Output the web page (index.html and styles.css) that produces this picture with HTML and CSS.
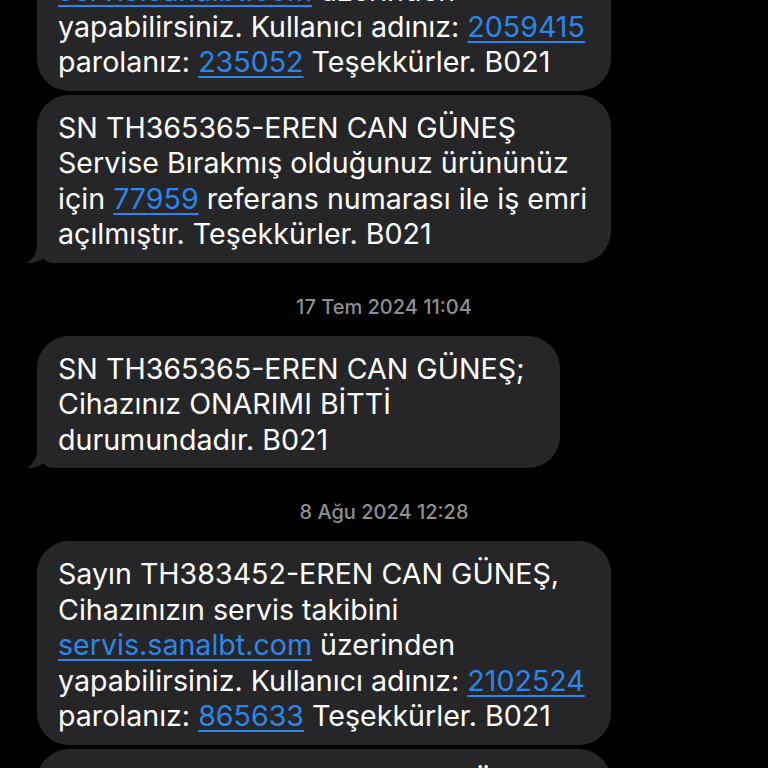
FILE: index.html
```html
<!DOCTYPE html>
<html lang="tr">
<head>
<meta charset="utf-8">
<title>Mesajlar</title>
<link rel="stylesheet" href="styles.css">
</head>
<body>
<main class="thread">
  <div class="bubble wide">
    Sayın TH365365-EREN CAN GÜNEŞ,<br>
    Cihazınızın servis takibini<br>
    <a class="link" href="#">servis.sanalbt.com</a> üzerinden<br>
    yapabilirsiniz. Kullanıcı adınız: <a class="link" href="#">2059415</a><br>
    parolanız: <a class="link" href="#">235052</a> Teşekkürler. B021
  </div>
  <div class="bubble wide tailed">
    SN TH365365-EREN CAN GÜNEŞ<br>
    Servise Bırakmış olduğunuz ürününüz<br>
    için <a class="link" href="#">77959</a> referans numarası ile iş emri<br>
    açılmıştır. Teşekkürler. B021
    <svg class="tail" width="28" height="20" viewBox="0 0 28 20"><path d="M10 0 L10 2 C10 10 6 16 0 20 C6 20.5 12 18.5 16 15.5 C19 18 23 20 28 20 L28 0 Z"/></svg>
  </div>

  <div class="stamp"><span class="date">17 Tem 2024</span> 11:04</div>

  <div class="bubble narrow tailed">
    SN TH365365-EREN CAN GÜNEŞ;<br>
    Cihazınız ONARIMI BİTTİ<br>
    durumundadır. B021
    <svg class="tail" width="28" height="20" viewBox="0 0 28 20"><path d="M10 0 L10 2 C10 10 6 16 0 20 C6 20.5 12 18.5 16 15.5 C19 18 23 20 28 20 L28 0 Z"/></svg>
  </div>

  <div class="stamp"><span class="date">8 Ağu 2024</span> 12:28</div>

  <div class="bubble wide">
    Sayın TH383452-EREN CAN GÜNEŞ,<br>
    Cihazınızın servis takibini<br>
    <a class="link" href="#">servis.sanalbt.com</a> üzerinden<br>
    yapabilirsiniz. Kullanıcı adınız: <a class="link" href="#">2102524</a><br>
    parolanız: <a class="link" href="#">865633</a> Teşekkürler. B021
  </div>
  <div class="bubble wide">
    Sayın TH383452-EREN CAN GÜNEŞ,<br>
    Cihazınız ONARIMI BİTTİ<br>
    durumundadır. B021
  </div>
</main>
</body>
</html>
```

FILE: styles.css
```css
* { box-sizing: border-box; }

html, body {
  margin: 0;
  padding: 0;
  background: #000;
  height: 768px;
  overflow: hidden;
}

.thread {
  display: flex;
  flex-direction: column;
  align-items: flex-start;
  gap: 4px;
  padding-left: 37px;
  margin-top: -113px;
  font-family: "Inter", "Noto Sans", sans-serif;
}

.bubble {
  position: relative;
  background: #262628;
  color: #ffffff;
  font-size: 28.6px;
  line-height: 35.5px;
  padding: 15px 20px 11px 21px;
  border-radius: 32px;
  white-space: nowrap;
}

.bubble.wide { width: 574px; }
.bubble.narrow { width: 523px; }

.bubble.tailed { border-bottom-left-radius: 18px; }

.tail {
  position: absolute;
  left: -10px;
  bottom: 0;
  fill: #262628;
}

.link {
  color: #2c86ea;
  text-decoration: underline;
  text-decoration-thickness: 2px;
  text-underline-offset: 4px;
}

.stamp {
  align-self: stretch;
  margin: 29px 0 14px -37px;
  text-align: center;
  color: #8e8e93;
  font-size: 20px;
  line-height: 22px;
  font-weight: 500;
}

.stamp .date { font-weight: 500; }
```
